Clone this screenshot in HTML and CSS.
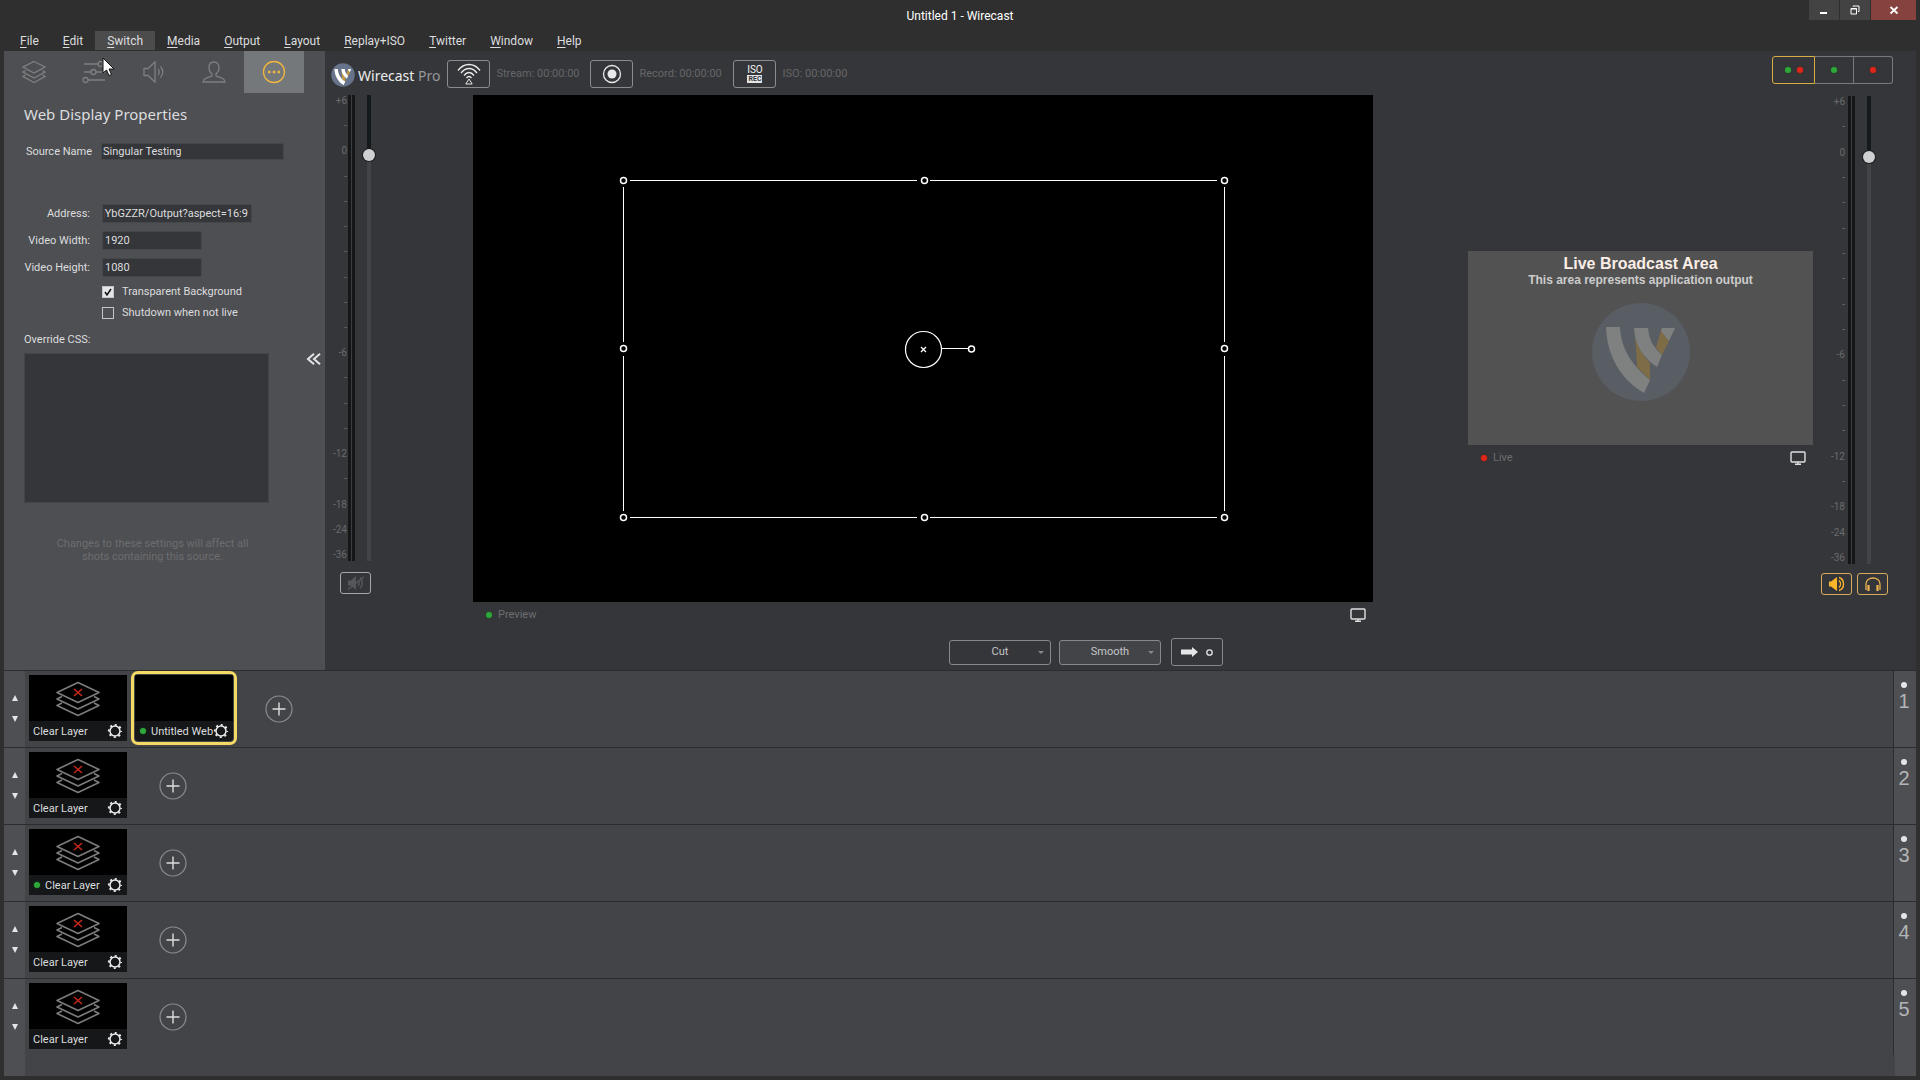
FILE: index.html
```html
<!DOCTYPE html>
<html lang="en">
<head>
<meta charset="utf-8">
<title>Untitled 1 - Wirecast</title>
<link rel="stylesheet" href="styles.css">
</head>
<body>
<svg class="defs" aria-hidden="true">
  <defs>
    <symbol id="i-stack" viewBox="0 0 44 36">
      <path d="M22 1.500 43 11.500 22 21.500 1 11.500ZM6 15.500 1 18 22 28 43 18 38 15.500M6 22 1 24.500 22 34.500 43 24.500 38 22" fill="none" stroke="#7c7c7c" stroke-width="1.600" stroke-linejoin="round"/>
      <path d="M18 8l8 7M26 8l-8 7" stroke="#c9281a" stroke-width="1.500"/>
    </symbol>
    <symbol id="i-gear" viewBox="0 0 16 16">
      <circle cx="8" cy="8" r="5" fill="none" stroke="#eceef0" stroke-width="1.500"/>
      <circle cx="8" cy="8" r="6.200" fill="none" stroke="#eceef0" stroke-width="1.800" stroke-dasharray="2 2.870" stroke-dashoffset="1"/>
    </symbol>
    <symbol id="i-plus" viewBox="0 0 28 28">
      <circle cx="14" cy="14" r="13" fill="none" stroke="#8b8c8e" stroke-width="1.200"/>
      <path d="M14 7.500v13M7.500 14h13" stroke="#dcdddf" stroke-width="1.400"/>
    </symbol>
    <symbol id="i-monitor" viewBox="0 0 16 14">
      <rect x="1" y="1" width="14" height="10" rx="1" fill="none" stroke="#dfe0e2" stroke-width="1.400"/>
      <path d="M8 11v2M5 13.300h6" stroke="#dfe0e2" stroke-width="1.400"/>
    </symbol>
    <symbol id="i-mark" viewBox="0 0 98 98">
      <path d="M43 31C45 43 51 53 58 60V77L45 64Z" class="mark-gold"/>
      <path d="M69 27 77 38 70 52 64 45Z" class="mark-gold"/>
      <path d="M14 24H28C29 46 40 62 58 77L52 90C28 76 15 52 14 24ZM42 25H56C57 37 62 45 70 52L65 64C51 55 43 42 42 25ZM70 25H83L77 38 69 28Z" class="mark-white"/>
    </symbol>
  </defs>
</svg>

<header class="titlebar">
  <h1>Untitled 1 - Wirecast</h1>
  <div class="window-buttons">
    <button aria-label="Minimize"><svg width="10" height="10" viewBox="0 0 10 10"><path d="M1 8h7" stroke="#fff" stroke-width="2"/></svg></button>
    <button aria-label="Restore"><svg width="10" height="10" viewBox="0 0 10 10"><path d="M3 1.500V1h6v5.500H8M1 3.500h5.500v5.500H1Z" fill="none" stroke="#fff"/><path d="M1 4h6" stroke="#fff"/></svg></button>
    <button class="close" aria-label="Close"><svg width="10" height="10" viewBox="0 0 10 10"><path d="M1.500 2l7 6.500M8.500 2l-7 6.500" stroke="#fff" stroke-width="1.800"/></svg></button>
  </div>
</header>

<nav class="menubar">
  <button><u>F</u>ile</button><button><u>E</u>dit</button><button class="hover"><u>S</u>witch</button><button><u>M</u>edia</button><button><u>O</u>utput</button><button><u>L</u>ayout</button><button><u>R</u>eplay+ISO</button><button><u>T</u>witter</button><button><u>W</u>indow</button><button><u>H</u>elp</button>
</nav>

<main class="app">
  <div class="work">
    <aside class="props">
      <div class="tabs">
        <button aria-label="Layers"><svg width="24" height="24" viewBox="0 0 24 24"><path d="M12 1.500 23 7 12 13 1 7ZM3.500 10.500 1 12l11 6 11-6-2.500-1.500M3.500 15 1 16.500l11 6 11-6L20.500 15"/></svg></button>
        <button aria-label="Adjustments"><svg width="24" height="24" viewBox="0 0 24 24"><path d="M2 4h14M2 12h7M14 12h9M6 20h17"/><circle cx="18.500" cy="4" r="2.500"/><circle cx="11.500" cy="12" r="2.500"/><circle cx="3.500" cy="20" r="2.500"/></svg></button>
        <button aria-label="Audio"><svg width="24" height="24" viewBox="0 0 24 24"><path d="M2 8.500h4L13 2v20l-7-6.500H2ZM16 9c1.500 1.500 1.500 4.500 0 6M18.500 6.500c3 3 3 8 0 11"/></svg></button>
        <button aria-label="Source"><svg width="24" height="24" viewBox="0 0 24 24"><path d="M12 2c-3 0-5 2.200-5 5.500 0 3 1.200 5 3 6.500v2c-5 1.500-8.500 2.500-9 6h22c-.5-3.500-4-4.500-9-6v-2c1.800-1.500 3-3.500 3-6.500C17 4.200 15 2 12 2Z"/></svg></button>
        <button class="active" aria-label="More"><svg width="24" height="24" viewBox="0 0 24 24"><circle cx="12" cy="12" r="10.500"/><path d="M6 12h2.500M10.800 12h2.500M15.500 12H18" stroke-width="2.500"/></svg></button>
      </div>
      <h2>Web Display Properties</h2>
      <div class="field name"><label for="src">Source Name</label><input id="src" type="text" value="Singular Testing"></div>
      <div class="field"><label for="addr">Address:</label><input id="addr" class="address" type="text" value="jYbGZZR/Output?aspect=16:9"></div>
      <div class="field"><label for="vw">Video Width:</label><input id="vw" class="short" type="text" value="1920"></div>
      <div class="field"><label for="vh">Video Height:</label><input id="vh" class="short" type="text" value="1080"></div>
      <div class="checks">
        <label><input type="checkbox" checked>Transparent Background</label>
        <label><input type="checkbox">Shutdown when not live</label>
      </div>
      <label class="css-label" for="css">Override CSS:</label>
      <div class="css-row">
        <textarea id="css"></textarea>
        <button class="collapse" aria-label="Collapse panel"><svg width="15" height="14" viewBox="0 0 15 14"><path d="M8 .8 2 6l6 5.200M14 .8 8 6l6 5.200" fill="none" stroke="#e4e5e7" stroke-width="2"/></svg></button>
      </div>
      <p class="hint">Changes to these settings will affect all<br>shots containing this source.</p>
    </aside>

    <section class="workspace">
      <div class="toolbar">
        <svg class="logo" width="24" height="24" viewBox="0 0 98 98"><circle cx="49" cy="49" r="48" fill="#66738a"/><use href="#i-mark"/></svg>
        <span class="brand">Wirecast <span>Pro</span></span>
        <button class="tool" aria-label="Stream"><svg width="26" height="24" viewBox="0 0 26 24"><path d="M2 8.500C8 .5 18 .5 24 8.500M5 11C9.500 5 16.500 5 21 11M8 13.500c3-4 7-4 10 0M10.500 16c1.500-2 3.500-2 5 0" fill="none" stroke="#e8e9eb" stroke-width="1.300"/><path d="M13 17l3.200 5H9.800Z" fill="none" stroke="#e8e9eb"/></svg></button>
        <span class="clock">Stream: 00:00:00</span>
        <button class="tool" aria-label="Record"><svg width="20" height="20" viewBox="0 0 20 20"><circle cx="10" cy="10" r="8.500" fill="none" stroke="#e8e9eb" stroke-width="1.300"/><circle cx="10" cy="10" r="4.500" fill="#e8e9eb"/></svg></button>
        <span class="clock">Record: 00:00:00</span>
        <button class="tool iso">ISO<b>REC</b></button>
        <span class="clock">ISO: 00:00:00</span>
        <div class="views">
          <button class="on" aria-label="Preview and live"><i class="dot green"></i><i class="dot red"></i></button>
          <button aria-label="Preview only"><i class="dot green"></i></button>
          <button aria-label="Live only"><i class="dot red"></i></button>
        </div>
      </div>

      <div class="stage">
        <div class="mixer">
          <div class="meter">
            <div class="scale"><span>+6</span><span>-</span><span>0</span><span>-</span><span>-</span><span>-</span><span>-</span><span>-</span><span>-</span><span>-</span><span>-6</span><span>-</span><span>-</span><span>-</span><span>-12</span><span>-</span><span>-18</span><span>-24</span><span>-36</span></div>
            <div class="bars"></div>
            <input type="range" min="0" max="100" value="88" aria-label="Preview volume">
          </div>
          <div class="audio-buttons">
            <button aria-label="Mute preview"><svg width="18" height="16" viewBox="0 0 18 16"><path d="M1 5.500h3L9 1v14l-5-4.500H1Z" fill="#55585a"/><path d="M11 5c1.500 1.500 1.500 4.500 0 6M13 2.500c3 3 3 8 0 11M1 14.500 17 2" fill="none" stroke="#55585a" stroke-width="1.400"/></svg></button>
          </div>
        </div>

        <div class="preview">
          <svg class="canvas" viewBox="0 0 900 507">
            <rect width="900" height="507" fill="#000"/>
            <path d="M157 85.500H444M457 85.500H744M157 422.500H444M457 422.500H744M150.500 92V247M150.500 261V416M751.500 92V247M751.500 261V416M469 253.500H495" stroke="#fff" fill="none"/>
            <g fill="none" stroke="#fff" stroke-width="1.500">
              <circle cx="150.500" cy="85.500" r="3"/><circle cx="451.500" cy="85.500" r="3"/><circle cx="751.500" cy="85.500" r="3"/>
              <circle cx="150.500" cy="253.500" r="3"/><circle cx="751.500" cy="253.500" r="3"/><circle cx="498.500" cy="254" r="3"/>
              <circle cx="150.500" cy="422.500" r="3"/><circle cx="451.500" cy="422.500" r="3"/><circle cx="751.500" cy="422.500" r="3"/>
            </g>
            <circle cx="450.500" cy="254.500" r="18" fill="none" stroke="#fff" stroke-width="1.200"/>
            <path d="M448 252l5 5M453 252l-5 5" stroke="#fff" stroke-width="1.300"/>
          </svg>
          <div class="caption"><i class="dot green"></i><span>Preview</span><button aria-label="Preview display"><svg width="16" height="14"><use href="#i-monitor"/></svg></button></div>
        </div>

        <div class="live">
          <div class="output">
            <strong>Live Broadcast Area</strong>
            <b>This area represents application output</b>
            <svg class="watermark" width="98" height="98" viewBox="0 0 98 98"><circle cx="49" cy="49" r="49" fill="#595d64"/><use href="#i-mark"/></svg>
          </div>
          <div class="caption"><i class="dot red"></i><span>Live</span><button aria-label="Live display"><svg width="16" height="14"><use href="#i-monitor"/></svg></button></div>
        </div>

        <div class="mixer master">
          <div class="meter">
            <div class="scale"><span>+6</span><span>-</span><span>0</span><span>-</span><span>-</span><span>-</span><span>-</span><span>-</span><span>-</span><span>-</span><span>-6</span><span>-</span><span>-</span><span>-</span><span>-12</span><span>-</span><span>-18</span><span>-24</span><span>-36</span></div>
            <div class="bars"></div>
            <input type="range" min="0" max="100" value="88" aria-label="Live volume">
          </div>
          <div class="audio-buttons gold">
            <button aria-label="Mute live"><svg width="18" height="16" viewBox="0 0 18 16"><path d="M1 5.500h2L9 1v14l-6-4.500H1Z" fill="#fbb52b"/><path d="M11 4.500c2 2 2 5 0 7M11 1.500c6 2 6 11 0 13" fill="none" stroke="#fbb52b" stroke-width="1.400"/></svg></button>
            <button aria-label="Monitor audio"><svg width="18" height="16" viewBox="0 0 18 16"><path d="M2 14V8c0-8 14-8 14 0v6" fill="none" stroke="#e9b04e" stroke-width="1.300"/><path d="M4.500 9v6M13.500 9v6" stroke="#f0b450" stroke-width="2.200"/></svg></button>
          </div>
        </div>
      </div>

      <div class="transitions">
        <button class="trans">Cut<i></i></button>
        <button class="trans lit">Smooth<i></i></button>
        <button class="go" aria-label="Go"><svg width="32" height="10" viewBox="0 0 32 10"><path d="M0 2.500h11V0l6 5-6 5V7.500H0Z" fill="#e4e5e7"/><circle cx="28.500" cy="5.500" r="2.700" fill="none" stroke="#e4e5e7" stroke-width="1.300"/></svg></button>
      </div>
    </section>
  </div>

  <section class="layers">
    <div class="layer">
      <div class="shift"><button aria-label="Move up" class="up"></button><button aria-label="Move down" class="down"></button></div>
      <div class="shots">
        <div class="shot"><div class="pic"><svg width="44" height="36"><use href="#i-stack"/></svg></div><div class="tag"><span>Clear Layer</span><button aria-label="Settings"><svg width="16" height="16"><use href="#i-gear"/></svg></button></div></div>
        <div class="shot selected"><div class="pic"></div><div class="tag"><i class="dot green"></i><span>Untitled Web</span><button aria-label="Settings"><svg width="16" height="16"><use href="#i-gear"/></svg></button></div></div>
        <button class="add" aria-label="Add shot"><svg width="28" height="28"><use href="#i-plus"/></svg></button>
      </div>
      <div class="num"><i></i>1</div>
    </div>
    <div class="layer">
      <div class="shift"><button aria-label="Move up" class="up"></button><button aria-label="Move down" class="down"></button></div>
      <div class="shots">
        <div class="shot"><div class="pic"><svg width="44" height="36"><use href="#i-stack"/></svg></div><div class="tag"><span>Clear Layer</span><button aria-label="Settings"><svg width="16" height="16"><use href="#i-gear"/></svg></button></div></div>
        <button class="add" aria-label="Add shot"><svg width="28" height="28"><use href="#i-plus"/></svg></button>
      </div>
      <div class="num"><i></i>2</div>
    </div>
    <div class="layer">
      <div class="shift"><button aria-label="Move up" class="up"></button><button aria-label="Move down" class="down"></button></div>
      <div class="shots">
        <div class="shot"><div class="pic"><svg width="44" height="36"><use href="#i-stack"/></svg></div><div class="tag"><i class="dot green"></i><span>Clear Layer</span><button aria-label="Settings"><svg width="16" height="16"><use href="#i-gear"/></svg></button></div></div>
        <button class="add" aria-label="Add shot"><svg width="28" height="28"><use href="#i-plus"/></svg></button>
      </div>
      <div class="num"><i></i>3</div>
    </div>
    <div class="layer">
      <div class="shift"><button aria-label="Move up" class="up"></button><button aria-label="Move down" class="down"></button></div>
      <div class="shots">
        <div class="shot"><div class="pic"><svg width="44" height="36"><use href="#i-stack"/></svg></div><div class="tag"><span>Clear Layer</span><button aria-label="Settings"><svg width="16" height="16"><use href="#i-gear"/></svg></button></div></div>
        <button class="add" aria-label="Add shot"><svg width="28" height="28"><use href="#i-plus"/></svg></button>
      </div>
      <div class="num"><i></i>4</div>
    </div>
    <div class="layer">
      <div class="shift"><button aria-label="Move up" class="up"></button><button aria-label="Move down" class="down"></button></div>
      <div class="shots">
        <div class="shot"><div class="pic"><svg width="44" height="36"><use href="#i-stack"/></svg></div><div class="tag"><span>Clear Layer</span><button aria-label="Settings"><svg width="16" height="16"><use href="#i-gear"/></svg></button></div></div>
        <button class="add" aria-label="Add shot"><svg width="28" height="28"><use href="#i-plus"/></svg></button>
      </div>
      <div class="num"><i></i>5</div>
    </div>
    <div class="rest"></div>
  </section>
</main>

<svg class="pointer" width="14" height="20" viewBox="0 0 14 20" aria-hidden="true"><path d="M1 1v15l3.500-3 2.500 5.500 2.500-1-2.500-5.500H12Z" fill="#fff" stroke="#111"/></svg>
</body>
</html>
```
FILE: styles.css
```css
* { box-sizing: border-box; }
body {
  margin: 0;
  min-height: 100vh;
  display: flex;
  flex-direction: column;
  background: #2f2f2f;
  color: #dcdddf;
  font: 11px/14px Roboto, "Noto Sans", sans-serif;
}
button { margin: 0; padding: 0; border: 0; background: none; color: inherit; font: inherit; }
input, textarea { color: inherit; font: inherit; margin: 0; }
svg { display: block; }
h1, h2, p { margin: 0; font-weight: normal; }
.defs { position: absolute; width: 0; height: 0; }
.mark-white { fill: var(--mark-white, #fff); }
.mark-gold { fill: var(--mark-gold, #c99a3c); }

.titlebar { display: grid; grid-template-columns: 1fr auto 1fr; height: 31px; }
.titlebar h1 { grid-column: 2; color: #fff; font-size: 12px; line-height: 32px; }
.window-buttons { display: flex; gap: 1px; justify-content: flex-end; height: 20px; padding-right: 4px; }
.window-buttons button { display: grid; place-items: center; width: 30px; background: #434343; }
.window-buttons .close { width: 45px; background: #86423f; }

.menubar { display: flex; height: 20px; padding-left: 8px; }
.menubar button { padding: 2px 12px 0; height: 19px; font-size: 12px; line-height: 17px; }
.menubar .hover { background: #4c4c4c; }
.menubar u { text-underline-offset: 2px; }

.app { flex: 1; display: flex; flex-direction: column; padding: 0 4px 4px; }
.work { flex: 1; display: flex; background: #353639; }

.props { width: 321px; background: #4e4f52; }
.tabs { display: flex; height: 42px; }
.tabs button { display: grid; place-items: center; width: 60px; }
.tabs svg { fill: none; stroke: #7d7f81; stroke-width: 1.300; }
.tabs .active { background: #74787a; }
.tabs .active svg { stroke: #f0b640; }
.props h2 { margin: 9px 20px 16px; font: 15px/24px "Noto Sans", sans-serif; }
.field { display: flex; align-items: center; gap: 12px; height: 19px; margin-bottom: 8px; }
.field label { width: 86px; text-align: right; }
.field input { width: 150px; height: 19px; padding: 0 2px; background: #353639; border: 1px solid #46474a; }
.field .address { padding: 0 1px; text-indent: -2px; }
.field .short { width: 100px; }
.field.name { margin-bottom: 43px; gap: 9px; }
.field.name label { width: 88px; }
.field.name input { width: 183px; height: 17px; padding: 0 1px; }
.checks { display: flex; flex-direction: column; gap: 7px; padding: 0 0 0 98px; }
.checks label { display: flex; align-items: center; gap: 8px; }
.checks input { appearance: none; width: 12px; height: 12px; border: 1px solid #c4c5c7; }
.checks input:checked {
  background: #e4e5e7 url("data:image/svg+xml,%3Csvg xmlns='http://www.w3.org/2000/svg' viewBox='0 0 10 10'%3E%3Cpath d='M2 5l2 3 4-6' fill='none' stroke='%23111' stroke-width='1.500'/%3E%3C/svg%3E");
}
.css-label { display: block; padding: 13px 20px 6px; }
.css-row { display: flex; justify-content: space-between; padding: 0 4px 0 20px; }
.css-row textarea { width: 245px; height: 150px; background: #353639; border: 1px solid #434447; resize: none; }
.collapse { align-self: flex-start; }
.hint { margin: 34px 44px 0 20px; text-align: center; line-height: 13px; color: #6c6d70; }

.workspace { flex: 1; display: flex; flex-direction: column; }
.toolbar { display: flex; align-items: center; height: 44px; padding: 0 23px 0 6px; }
.brand { margin: 6px 7px 0 3px; font: 14px/20px "Noto Sans", sans-serif; color: #eceded; white-space: nowrap; }
.brand span { color: #96979a; }
.logo { margin-top: 4px; }
.tool { display: grid; place-items: center; width: 43px; height: 28px; margin-top: 2px; border: 1px solid #8b8c8e; border-radius: 3px; }
.iso { align-content: center; font-size: 10px; line-height: 10px; color: #f2f3f4; }
.iso b { padding: 0 1px; background: #e4e5e7; color: #353639; font-size: 7px; line-height: 8px; }
.clock { width: 87px; margin: 2px 7px 0 6px; color: #65666a; white-space: nowrap; }
.views { display: flex; align-self: flex-start; margin: 5px 0 0 auto; }
.views button { display: flex; align-items: center; justify-content: center; gap: 6px; width: 39px; height: 28px; border: 1px solid #77797b; border-left-width: 0; }
.views .on { width: 43px; border: 1px solid #d8ad45; border-radius: 3px 0 0 3px; }
.views button:last-child { border-radius: 0 3px 3px 0; }
.dot { width: 6px; height: 6px; border-radius: 50%; flex: none; }
.green { background: #2fa83a; box-shadow: 0 0 2px #12601a; }
.red { background: #e0261a; box-shadow: 0 0 2px #8a1810; }

.stage { display: grid; grid-template-columns: 148px 900fr 95px 345fr 103px; }
.meter { display: flex; height: 466px; }
.scale { display: flex; flex-direction: column; justify-content: space-between; width: 22px; margin-right: 1px; text-align: right; font-size: 10px; line-height: 12px; color: #6a6b6e; }
.bars { width: 7px; background: linear-gradient(90deg, #151617 3px, #3c3d40 3px 4px, #151617 4px); }
.meter input {
  appearance: none;
  writing-mode: vertical-lr;
  direction: rtl;
  width: 14px;
  height: 466px;
  margin-left: 7px;
  background: linear-gradient(#14191b 13%, #434447 13%) center / 4px 100% no-repeat;
}
.meter input::-webkit-slider-thumb { appearance: none; width: 12px; height: 12px; border-radius: 50%; background: #cfd0d1; box-shadow: 0 0 0 1px #1c1d1f; }
.audio-buttons { display: flex; gap: 5px; padding: 11px 0 0 15px; }
.audio-buttons button { display: grid; place-items: center; width: 31px; height: 22px; border: 1px solid #a5a7a9; border-radius: 3px; }
.audio-buttons.gold button { border-color: #d8ac5c; }
.master { padding-top: 1px; }
.master .meter, .master .meter input { height: 468px; }
.master .scale { width: 32px; margin-right: 3px; }
.master .audio-buttons { padding: 9px 0 0 8px; }

.canvas { width: 100%; height: auto; }
.caption { display: flex; align-items: center; gap: 6px; height: 25px; padding: 0 7px 0 13px; color: #6c6d70; }
.caption button { margin-left: auto; }
.live { grid-column: 4; padding-top: 156px; }
.output { display: flex; flex-direction: column; align-items: center; aspect-ratio: 345 / 194; padding-top: 4px; background: #525252; font-family: "Liberation Sans", sans-serif; white-space: nowrap; }
.output strong { font-size: 16px; line-height: 18px; color: #fbeee6; }
.output b { font-size: 12px; line-height: 15px; color: #cccccc; }
.watermark { --mark-white: #7f8080; --mark-gold: #7d6c46; margin-top: 15px; }

.transitions { display: flex; align-items: center; justify-content: center; gap: 8px; margin-top: auto; padding: 0 69px 4px 0; }
.trans { position: relative; width: 102px; height: 25px; border: 1px solid #86888a; border-radius: 3px; color: #c4c5c7; }
.trans.lit { background: #434447; }
.trans i { position: absolute; right: 6px; top: 10px; border: 3px solid transparent; border-top-color: #86888a; }
.go { display: grid; place-items: center; width: 52px; height: 28px; margin-left: 2px; border: 1px solid #86888a; border-radius: 3px; }

.layers { display: flex; flex-direction: column; background: #434447; }
.layer { display: flex; height: 77px; border-top: 1px solid #2b2c2e; }
.shift { display: flex; flex-direction: column; align-items: center; gap: 15px; width: 21px; padding-top: 24px; background: #4e4f52; }
.shift button { border: 3px solid transparent; }
.shift .up { border-bottom: 6px solid #e4e5e7; border-top: 0; }
.shift .down { border-top: 6px solid #e4e5e7; border-bottom: 0; }
.shots { flex: 1; display: flex; align-items: flex-start; padding: 4px; }
.shot { width: 98px; background: #151718; }
.pic { display: grid; place-items: center; height: 46px; padding-top: 2px; background: #000; }
.tag { display: flex; align-items: center; height: 20px; padding: 0 4px; white-space: nowrap; }
.tag span { padding-top: 2px; }
.tag .dot { margin: 0 5px 0 1px; }
.tag button { margin-left: auto; }
.shot.selected { margin-left: 8px; outline: 3px solid #f5d965; outline-offset: 1px; border-radius: 3px; }
.add { margin: 20px 0 0 32px; }
.num { display: flex; flex-direction: column; align-items: center; width: 23px; padding: 11px 2px 0 0; border-left: 1px solid #2b2c2e; background: #4e4f52; font: 20px/22px "Liberation Sans", sans-serif; color: #b4b5b8; }
.num i { width: 6px; height: 6px; margin-bottom: 2px; border-radius: 50%; background: #e4e5e7; }
.rest { height: 21px; background: linear-gradient(90deg, #4e4f52 21px, transparent 21px calc(100% - 21px), #4e4f52 calc(100% - 21px)); }

.pointer { position: absolute; left: 102px; top: 57px; }
```
